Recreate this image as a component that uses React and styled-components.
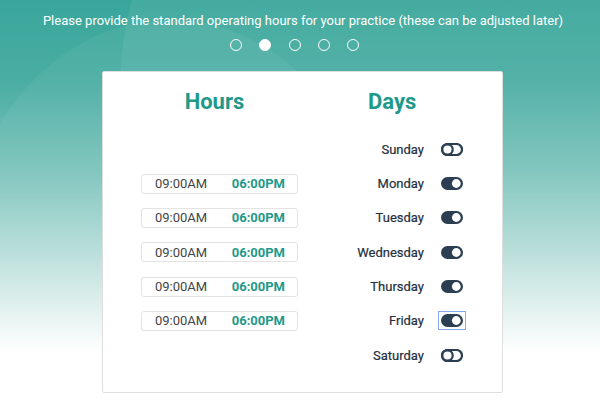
import React from "react";
import styled, { createGlobalStyle } from "styled-components";

const GlobalStyle = createGlobalStyle`
  html, body {
    margin: 0;
    padding: 0;
  }
  body {
    font-family: Roboto, "Liberation Sans", Arial, sans-serif;
    background: #fff;
  }
`;

const Page = styled.div`
  position: relative;
  width: 600px;
  height: 400px;
  overflow: hidden;
  background: linear-gradient(
    to bottom,
    #39a69b 0%,
    #4aada3 20%,
    #7ac3bb 42%,
    #b4dcd7 62%,
    #e3f2f0 78%,
    #ffffff 88%
  );

  &::before {
    content: "";
    position: absolute;
    left: 120px;
    top: -260px;
    width: 700px;
    height: 700px;
    border-radius: 50%;
    background: rgba(255, 255, 255, 0.06);
  }

  &::after {
    content: "";
    position: absolute;
    left: -40px;
    top: 20px;
    width: 420px;
    height: 500px;
    border-radius: 50%;
    background: rgba(255, 255, 255, 0.05);
  }
`;

const Content = styled.div`
  position: relative;
  z-index: 1;
  padding-top: 12px;
`;

const Title = styled.p`
  margin: 0;
  text-align: center;
  color: #fff;
  font-size: 13px;
  line-height: 17px;
  padding-left: 6px;
`;

const Steps = styled.div`
  display: flex;
  justify-content: center;
  gap: 17.2px;
  margin-top: 10px;
  padding-right: 11px;
`;

const Dot = styled.span`
  width: 12px;
  height: 12px;
  box-sizing: border-box;
  border-radius: 50%;
  border: 1.6px solid #fff;
  background: ${({ $active }) => ($active ? "#fff" : "transparent")};
`;

const Card = styled.div`
  margin: 20px 0 0 102px;
  width: 401px;
  height: 322px;
  box-sizing: border-box;
  background: #fff;
  border: 1px solid #dedede;
  border-radius: 2px;
  padding-top: 17px;
`;

const HeadRow = styled.div`
  display: grid;
  grid-template-columns: 223px 1fr;
  margin-bottom: 17px;
`;

const Heading = styled.h2`
  margin: 0;
  font-size: 22px;
  line-height: 26px;
  font-weight: 700;
  color: #1f998a;
  text-align: ${({ $align }) => $align || "center"};
  padding-left: ${({ $pad }) => $pad || 0}px;
`;

const Row = styled.div`
  display: grid;
  grid-template-columns: 223px 98px 22px;
  align-items: center;
  height: 34.35px;
`;

const TimeBox = styled.div`
  margin-left: 38px;
  width: 157px;
  height: 20px;
  box-sizing: border-box;
  border: 1px solid #e3e3e3;
  border-radius: 3px;
  display: flex;
  align-items: center;
  justify-content: space-between;
  padding: 0 12px 0 13px;
  font-size: 13px;
`;

const StartTime = styled.span`
  color: #444;
`;

const EndTime = styled.span`
  color: #1f998a;
  font-weight: 700;
`;

const DayLabel = styled.span`
  text-align: right;
  font-size: 13px;
  font-weight: 400;
  color: #25303c;
  -webkit-text-stroke: 0.2px #25303c;
`;

const ToggleWrap = styled.span`
  grid-column: 3;
  margin-left: 17px;
  width: 22px;
  height: 13px;
  display: flex;
  outline: ${({ $focused }) => ($focused ? "1px solid #85a9ec" : "none")};
  outline-offset: 2px;
`;

const Toggle = ({ on, focused }) => (
  <ToggleWrap $focused={focused}>
    {on ? (
      <svg width="22" height="13" viewBox="0 0 22 13">
        <rect x="0" y="0" width="22" height="13" rx="6.5" fill="#2b3e52" />
        <circle cx="15.3" cy="6.5" r="4.4" fill="#fff" />
      </svg>
    ) : (
      <svg width="22" height="13" viewBox="0 0 22 13">
        <rect x="1" y="1" width="20" height="11" rx="5.5" fill="#fff" stroke="#2b3e52" strokeWidth="2.2" />
        <circle cx="6.5" cy="6.5" r="5.2" fill="#fff" stroke="#2b3e52" strokeWidth="2.2" />
      </svg>
    )}
  </ToggleWrap>
);

const days = [
  { name: "Sunday", on: false },
  { name: "Monday", on: true },
  { name: "Tuesday", on: true },
  { name: "Wednesday", on: true },
  { name: "Thursday", on: true },
  { name: "Friday", on: true, focused: true },
  { name: "Saturday", on: false },
];

export default function App() {
  return (
    <>
      <GlobalStyle />
      <Page>
        <Content>
          <Title>
            Please provide the standard operating hours for your practice (these can be adjusted later)
          </Title>
          <Steps>
            {[0, 1, 2, 3, 4].map((i) => (
              <Dot key={i} $active={i === 1} />
            ))}
          </Steps>
          <Card>
            <HeadRow>
              <Heading>Hours</Heading>
              <Heading $align="left" $pad={42}>
                Days
              </Heading>
            </HeadRow>
            {days.map((d) => (
              <Row key={d.name}>
                {d.on ? (
                  <TimeBox>
                    <StartTime>09:00AM</StartTime>
                    <EndTime>06:00PM</EndTime>
                  </TimeBox>
                ) : (
                  <span />
                )}
                <DayLabel>{d.name}</DayLabel>
                <Toggle on={d.on} focused={d.focused} />
              </Row>
            ))}
          </Card>
        </Content>
      </Page>
    </>
  );
}
